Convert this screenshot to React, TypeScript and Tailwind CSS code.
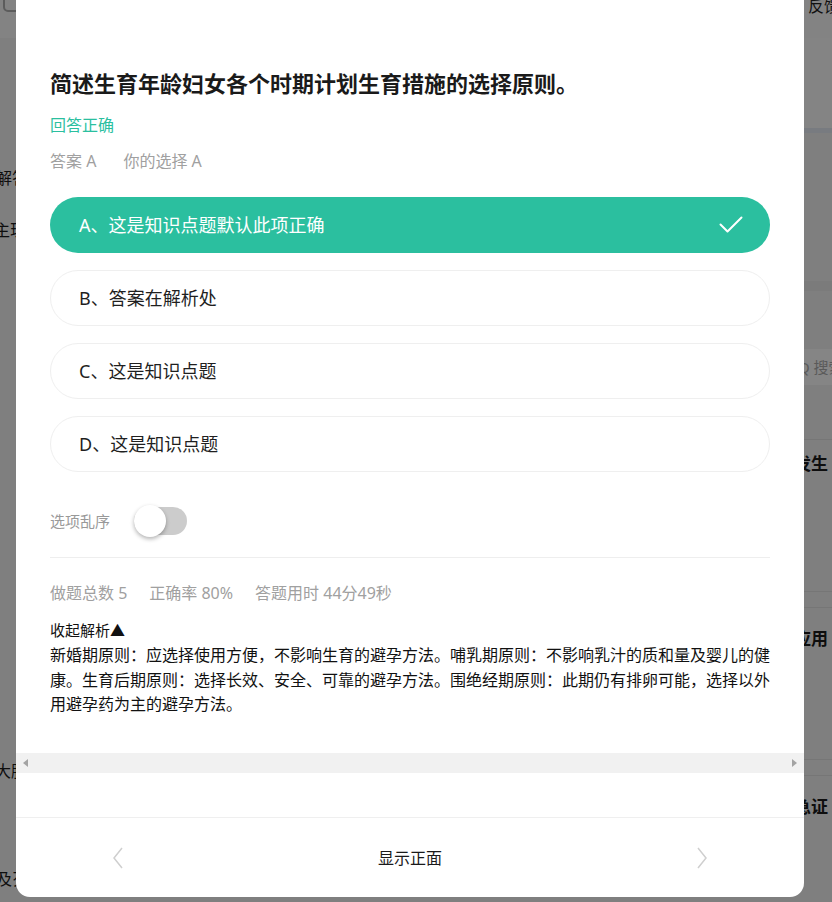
import React from "react";

const options = [
  { key: "A", text: "这是知识点题默认此项正确", correct: true },
  { key: "B", text: "答案在解析处", correct: false },
  { key: "C", text: "这是知识点题", correct: false },
  { key: "D", text: "这是知识点题", correct: false },
];

function CheckIcon() {
  return (
    <svg width="24" height="18" viewBox="0 0 24 18" fill="none">
      <polyline points="1.5,8.5 8.5,15.5 22.5,1.5" stroke="white" strokeWidth="2" strokeLinecap="round" strokeLinejoin="round" />
    </svg>
  );
}

function Background() {
  return (
    <div className="flex flex-col h-full">
      <div className="h-[38px] bg-[#838383] flex justify-between items-start">
        <div className="ml-[3px] mt-[-10px] w-[40px] h-[22px] rounded-[5px] border-2 border-[#5c5c5c]" />
        <span className="mt-[-6px] mr-[-40px] whitespace-nowrap text-[16px] text-[#111]">反馈意见</span>
      </div>
      <div className="flex flex-1 justify-between">
        <div className="w-[40px] flex flex-col whitespace-nowrap text-[16px] text-[#0e0e0e]">
          <span className="mt-[128px] ml-[-4px]">解答</span>
          <span className="mt-[28px] ml-[-6px]">主现</span>
          <span className="mt-[517px] ml-[-5px]">大肚</span>
          <span className="mt-[84px] ml-[-4px]">及歹</span>
        </div>
        <div className="w-[40px] flex flex-col whitespace-nowrap">
          <div className="h-[90px] bg-[#848484]" />
          <div className="h-[5px] bg-[#787b80]" />
          <div className="h-[148px]" />
          <div className="h-[10px] bg-[#7b7b7b]" />
          <div className="h-[58px]" />
          <div className="h-[36px] bg-[#858585] flex items-center text-[15px] text-[#5a5a5a] pl-[6px]">Q 搜索</div>
          <div className="h-[55px] border-b border-[#767676]" />
          <div className="h-[48px] flex items-center font-bold text-[17px] text-[#0e0e0e] pl-[2px]">发生</div>
          <div className="h-[104px] border-b border-[#767676]" />
          <div className="h-[16px] border-b border-[#767676]" />
          <div className="h-[62px] flex items-center font-bold text-[17px] text-[#0e0e0e] pl-[2px]">应用</div>
          <div className="h-[90px] border-b border-[#767676]" />
          <div className="h-[16px] border-b border-[#767676]" />
          <div className="h-[62px] flex items-center font-bold text-[17px] text-[#0e0e0e] pl-[2px]">急证</div>
        </div>
      </div>
    </div>
  );
}

export default function App() {
  return (
    <div className="relative w-[832px] h-[902px] overflow-hidden bg-[#7f7f7f] font-['Noto_Sans','Noto_Sans_CJK_SC',sans-serif]">
      <Background />
      <div className="absolute left-[16px] top-0 w-[788px] h-[897px] bg-white rounded-b-[14px] flex flex-col overflow-hidden">
        <div className="flex-1 flex flex-col">
          <div className="px-[34px] pt-[68px] pr-[34px]">
            <h1 className="text-[22px] leading-[30px] font-bold text-[#1a1a1a]">简述生育年龄妇女各个时期计划生育措施的选择原则。</h1>
            <div className="mt-[15px] text-[16px] leading-[24px] text-[#2bbf9f]">回答正确</div>
            <div className="mt-[12px] flex gap-[27px] text-[16px] leading-[24px] text-[#a0a0a0]">
              <span>答案 A</span>
              <span>你的选择 A</span>
            </div>
            <div className="mt-[24px] flex flex-col gap-[17px]">
              {options.map((o) => (
                <div
                  key={o.key}
                  className={
                    o.correct
                      ? "h-[56px] rounded-full bg-[#2bbf9f] flex items-center justify-between pl-[29px] pr-[27px] text-[18px] text-white"
                      : "h-[56px] rounded-full border border-[#efefef] flex items-center pl-[28px] text-[18px] text-[#1f1f1f]"
                  }
                >
                  <span>{o.key}、{o.text}</span>
                  {o.correct && <CheckIcon />}
                </div>
              ))}
            </div>
            <div className="mt-[35px] flex items-center gap-[24px]">
              <span className="text-[15px] text-[#999]">选项乱序</span>
              <div className="relative w-[53px] h-[28px] rounded-full bg-[#cccccc]">
                <div className="absolute left-0 top-[-2px] w-[32px] h-[32px] rounded-full bg-white shadow-[0_2px_4px_rgba(0,0,0,0.3)]" />
              </div>
            </div>
            <div className="mt-[22px] h-px bg-[#eeeeee]" />
            <div className="mt-[23px] flex gap-[22px] text-[16px] leading-[24px] text-[#a0a0a0]">
              <span>做题总数 5</span>
              <span>正确率 80%</span>
              <span>答题用时 44分49秒</span>
            </div>
            <div className="mt-[13px] text-[15px] leading-[25px] text-[#111]">收起解析▲</div>
            <p className="text-[16px] leading-[24.5px] text-[#111]">
              新婚期原则：应选择使用方便，不影响生育的避孕方法。哺乳期原则：不影响乳汁的质和量及婴儿的健康。生育后期原则：选择长效、安全、可靠的避孕方法。围绝经期原则：此期仍有排卵可能，选择以外用避孕药为主的避孕方法。
            </p>
          </div>
          <div className="mt-auto h-[20px] bg-[#f1f1f1] flex items-center justify-between px-[7px]">
            <svg width="5" height="8" viewBox="0 0 5 8"><polygon points="5,0 5,8 0,4" fill="#a3a3a3" /></svg>
            <svg width="5" height="8" viewBox="0 0 5 8"><polygon points="0,0 0,8 5,4" fill="#a3a3a3" /></svg>
          </div>
          <div className="h-[44px]" />
        </div>
        <div className="h-[80px] border-t border-[#efefef] flex items-center justify-between px-[96px]">
          <svg width="12" height="22" viewBox="0 0 12 22" fill="none">
            <polyline points="10,1 2,11 10,21" stroke="#cfcfcf" strokeWidth="1.5" />
          </svg>
          <span className="text-[16px] text-[#1a1a1a]">显示正面</span>
          <svg width="12" height="22" viewBox="0 0 12 22" fill="none">
            <polyline points="2,1 10,11 2,21" stroke="#cfcfcf" strokeWidth="1.5" />
          </svg>
        </div>
      </div>
    </div>
  );
}
